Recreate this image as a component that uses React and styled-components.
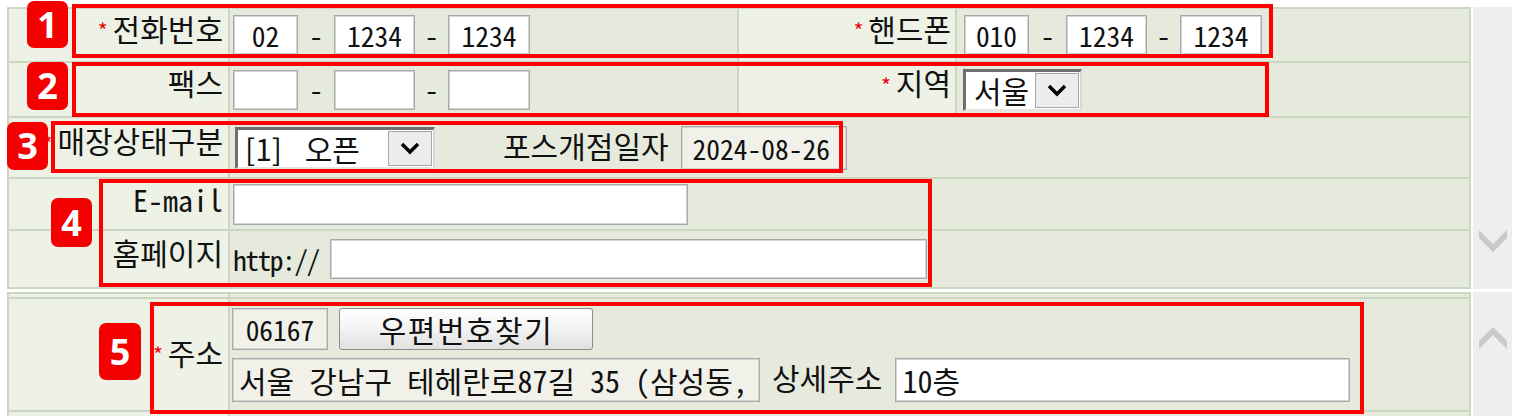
import React from 'react'
import styled, { createGlobalStyle } from 'styled-components'

const LINE = '#cdd6c1'

const GlobalStyle = createGlobalStyle`
  html, body {
    margin: 0;
    background: #fff;
    overflow: hidden;
  }
  * {
    box-sizing: border-box;
  }
`

const Page = styled.div`
  position: relative;
  width: 1515px;
  height: 416px;
  padding: 7px 0 0 7px;
  overflow: hidden;
  font-family: "Noto Sans CJK KR", "Noto Sans", sans-serif;
  font-size: 30px;
  line-height: 1.2;
  letter-spacing: 0;
  font-feature-settings: "hwid" 1;
  color: #111;
`

const Pane = styled.div`
  display: flex;
  gap: 2px;
  margin-top: ${p => p.$top || 0}px;
`

const Sheet = styled.div`
  width: 1464px;
  border: 2px solid ${LINE};
  border-bottom: none;
  background: #e6eadc;
`

const Row = styled.div`
  display: grid;
  grid-template-columns: ${p => (p.$split ? '221px 509px 218px 1fr' : '221px 1fr')};
  grid-template-rows: minmax(0, 1fr);
  height: ${p => p.$h}px;
  border-bottom: 2px solid ${LINE};
`

const Label = styled.div`
  display: flex;
  align-items: center;
  justify-content: flex-end;
  padding: 0 ${p => p.$pr ?? 5}px ${p => p.$pb ?? 15}px 0;
  background: #eef1e6;
  border-right: 2px solid ${LINE};
  white-space: nowrap;
  overflow: visible;
`

const Star = styled.span`
  display: inline-block;
  width: 15px;
  color: #e80000;
  font-size: 21px;
  margin-top: 7px;
`

const Cell = styled.div`
  display: flex;
  align-items: center;
  padding-left: ${p => p.$pl ?? 3}px;
  border-right: ${p => (p.$divider ? `2px solid ${LINE}` : 'none')};
  white-space: nowrap;
`

const Input = styled.input`
  width: ${p => p.$w}px;
  height: ${p => p.$h ?? 40}px;
  margin: 0 0 0 ${p => p.$ml ?? 0}px;
  padding: 0 ${p => p.$pad ?? 6}px;
  border: 1px solid #a9a9a9;
  box-shadow: inset 1px 1px 0 #d4d4d4, inset -1px -1px 0 #d4d4d4;
  background: ${p => (p.$ro ? '#f1f1ea' : '#fff')};
  font: inherit;
  font-size: ${p => (p.$num ? '27.5px' : 'inherit')};
  letter-spacing: inherit;
  font-feature-settings: inherit;
  color: inherit;
  text-align: ${p => (p.$center ? 'center' : 'left')};
  outline: none;
`

const Dash = styled.span`
  width: ${p => p.$w ?? 35}px;
  text-align: center;
  font-size: 27.5px;
`

const Select = styled.div`
  display: flex;
  align-items: center;
  justify-content: space-between;
  width: ${p => p.$w}px;
  height: 42px;
  margin-left: ${p => p.$ml ?? 0}px;
  padding: 0 1px 0 ${p => p.$pl ?? 8}px;
  background: #fff;
  border-top: 3px solid #6f6f6f;
  border-left: 3px solid #6f6f6f;
  border-right: 2px solid #d8d8d8;
  border-bottom: 2px solid #e4e4e4;
`

const SelectText = styled.span`
  font-feature-settings: normal;
  word-spacing: 16px;
  white-space: pre;
`

const DropButton = styled.span`
  display: flex;
  align-items: center;
  justify-content: center;
  width: 44px;
  height: 35px;
  background: #ececec;
  border: 1px solid #a6a6a6;
`

const InlineLabel = styled.span`
  margin: 0 ${p => p.$mr ?? 12}px 0 ${p => p.$ml ?? 0}px;
  padding-bottom: 6px;
`

const Http = styled.span`
  width: 97px;
  font-size: 27.5px;
  letter-spacing: -1.5px;
`

const AddressBlock = styled.div`
  display: flex;
  flex-direction: column;
  gap: 8px;
`

const Line = styled.div`
  display: flex;
  align-items: center;
`

const Button = styled.button`
  width: 254px;
  height: 42px;
  margin-left: 11px;
  padding: 0;
  border: 1px solid #8e8e8e;
  border-radius: 3px;
  background: linear-gradient(#fefefe, #f4f4f4 45%, #e0e0e0);
  font: inherit;
  letter-spacing: 1.5px;
  font-feature-settings: inherit;
  color: inherit;
`

const Scroll = styled.div`
  width: 39px;
  background: #eeeeee;
  display: flex;
  flex-direction: column;
  align-items: center;
  justify-content: ${p => (p.$end ? 'flex-end' : 'flex-start')};
  padding: ${p => (p.$end ? '0 0 37px' : '35px 0 0')};
`

const Mark = styled.div`
  position: absolute;
  left: ${p => p.$x}px;
  top: ${p => p.$y}px;
  width: ${p => p.$w}px;
  height: ${p => p.$h}px;
  border: 4px solid #ff0000;
  pointer-events: none;
`

const Badge = styled.div`
  position: absolute;
  left: ${p => p.$x}px;
  top: ${p => p.$y}px;
  width: ${p => p.$w ?? 41}px;
  height: ${p => p.$h ?? 48}px;
  display: flex;
  align-items: center;
  justify-content: center;
  background: #f50000;
  border-radius: 7px;
  color: #fff;
  font-family: "Open Sans", "Liberation Sans", sans-serif;
  font-weight: 700;
  font-size: 36px;
  letter-spacing: 0;
  font-feature-settings: normal;
`

const Chevron = () => (
  <svg width="20" height="13" viewBox="0 0 20 13">
    <polyline points="2,2 10,10 18,2" fill="none" stroke="#000" strokeWidth="3.5" />
  </svg>
)

const ScrollArrow = ({ up }) => (
  <svg width="28" height="22" viewBox="0 0 28 22">
    <polygon
      fill="#c9c9c9"
      points={up ? '0,22 14,8 28,22 28,14 14,0 0,14' : '0,0 14,14 28,0 28,8 14,22 0,8'}
    />
  </svg>
)

const Req = () => <Star>*</Star>

export default function App() {
  return (
    <Page>
      <GlobalStyle />

      <Pane>
        <Sheet>
          <Row $split $h={54}>
            <Label><Req />전화번호</Label>
            <Cell $divider>
              <Input $w={65} $num $center readOnly value="02" />
              <Dash $w={36}>-</Dash>
              <Input $w={81} $num $center readOnly value="1234" />
              <Dash $w={33}>-</Dash>
              <Input $w={82} $num $center readOnly value="1234" />
            </Cell>
            <Label $pr={4}><Req />핸드폰</Label>
            <Cell $pl={7}>
              <Input $w={65} $num $center readOnly value="010" />
              <Dash $w={37}>-</Dash>
              <Input $w={81} $num $center readOnly value="1234" />
              <Dash $w={33}>-</Dash>
              <Input $w={82} $num $center readOnly value="1234" />
            </Cell>
          </Row>

          <Row $split $h={55}>
            <Label>팩스</Label>
            <Cell $divider>
              <Input $w={65} readOnly value="" />
              <Dash $w={36}>-</Dash>
              <Input $w={81} readOnly value="" />
              <Dash $w={33}>-</Dash>
              <Input $w={82} readOnly value="" />
            </Cell>
            <Label $pr={4}><Req />지역</Label>
            <Cell $pl={6}>
              <Select $w={119} $pl={8}>
                <SelectText>서울</SelectText>
                <DropButton><Chevron /></DropButton>
              </Select>
            </Cell>
          </Row>

          <Row $h={61}>
            <Label><Req />매장상태구분</Label>
            <Cell>
              <Select $w={200} $ml={2} $pl={7}>
                <SelectText>[1] 오픈</SelectText>
                <DropButton><Chevron /></DropButton>
              </Select>
              <InlineLabel $ml={68}>포스개점일자</InlineLabel>
              <Input $w={166} $h={44} $pad={11} $num $ro readOnly value="2024-08-26" />
            </Cell>
          </Row>

          <Row $h={52}>
            <Label $pb={11}>E-mail</Label>
            <Cell>
              <Input $w={455} $h={41} readOnly value="" />
            </Cell>
          </Row>

          <Row $h={58}>
            <Label>홈페이지</Label>
            <Cell>
              <Http>http://</Http>
              <Input $w={597} $h={40} readOnly value="" />
            </Cell>
          </Row>
        </Sheet>
        <Scroll $end>
          <ScrollArrow />
        </Scroll>
      </Pane>

      <Pane $top={3}>
        <Sheet>
          <Row $h={5}>
            <Label $pb={0} />
            <Cell />
          </Row>

          <Row $h={113}>
            <Label $pb={6}><Req />주소</Label>
            <Cell $pl={2}>
              <AddressBlock>
                <Line>
                  <Input $w={96} $h={42} $num $center $ro readOnly value="06167" />
                  <Button type="button">우편번호찾기</Button>
                </Line>
                <Line>
                  <Input $w={528} $h={44} $ro readOnly value="서울 강남구 테헤란로87길 35 (삼성동," />
                  <InlineLabel $ml={12} $mr={13}>상세주소</InlineLabel>
                  <Input $w={455} $h={44} readOnly value="10층" />
                </Line>
              </AddressBlock>
            </Cell>
          </Row>

          <Row $h={40}>
            <Label $pb={0} />
            <Cell />
          </Row>
        </Sheet>
        <Scroll>
          <ScrollArrow up />
        </Scroll>
      </Pane>

      <Mark $x={72} $y={4} $w={1201} $h={54} />
      <Mark $x={72} $y={62} $w={1197} $h={55} />
      <Mark $x={51} $y={121} $w={792} $h={52} />
      <Mark $x={99} $y={179} $w={833} $h={108} />
      <Mark $x={150} $y={302} $w={1214} $h={112} />

      <Badge $x={27} $y={1} $h={47}>1</Badge>
      <Badge $x={27} $y={62}>2</Badge>
      <Badge $x={7} $y={122}>3</Badge>
      <Badge $x={51} $y={198} $h={49}>4</Badge>
      <Badge $x={99} $y={323} $w={42} $h={57}>5</Badge>
    </Page>
  )
}
